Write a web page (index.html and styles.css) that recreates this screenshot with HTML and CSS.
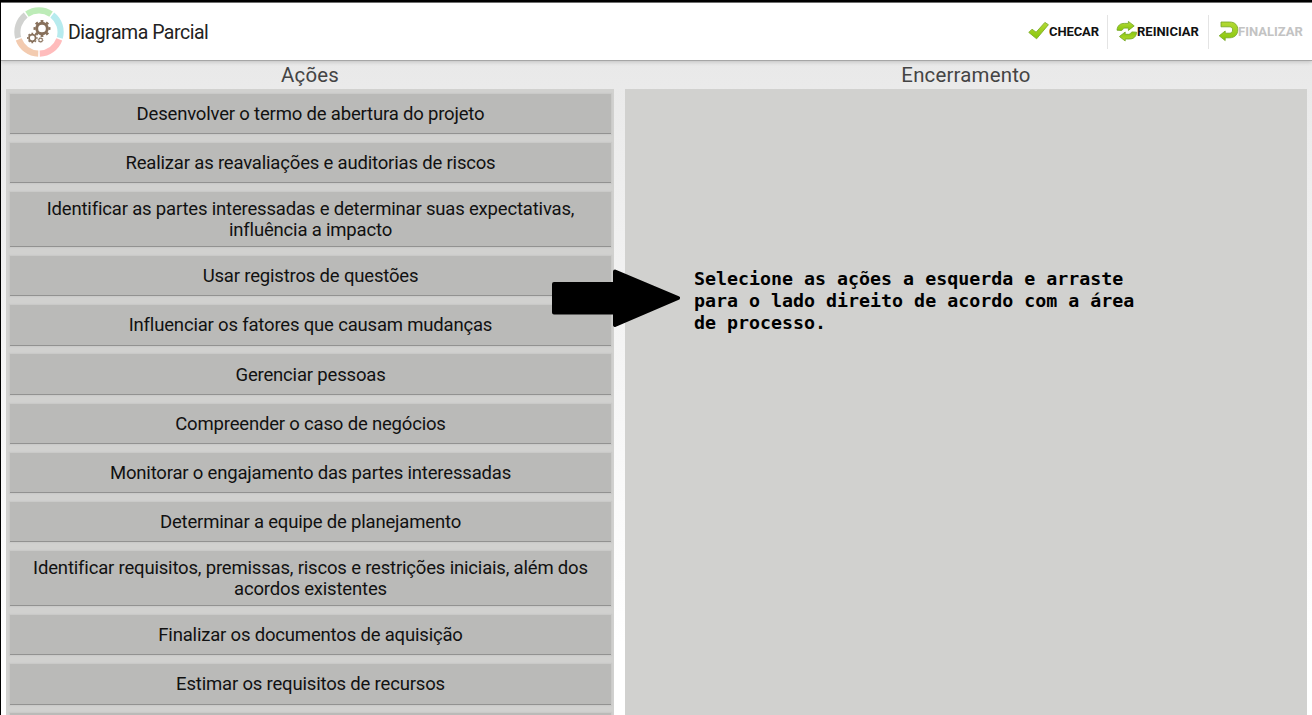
FILE: index.html
```html
<!DOCTYPE html>
<html lang="pt-BR">
<head>
<meta charset="utf-8">
<title>Diagrama Parcial</title>
<link rel="stylesheet" href="styles.css">
</head>
<body>
<div class="screen">
  <header class="bar">
    <svg class="logo" viewBox="0 0 50 50">
      <g fill="none" stroke-width="6.2">
        <circle class="seg" cx="25" cy="25" r="21.6" pathLength="360" stroke="#ffbcbc" transform="rotate(20 25 25)"/>
        <circle class="seg" cx="25" cy="25" r="21.6" pathLength="360" stroke="#f3cbb0" transform="rotate(92 25 25)"/>
        <circle class="seg" cx="25" cy="25" r="21.6" pathLength="360" stroke="#d1d2d0" transform="rotate(164 25 25)"/>
        <circle class="seg" cx="25" cy="25" r="21.6" pathLength="360" stroke="#bdecb8" transform="rotate(236 25 25)"/>
        <circle class="seg" cx="25" cy="25" r="21.6" pathLength="360" stroke="#b7ebee" transform="rotate(308 25 25)"/>
      </g>
      <g fill="none" stroke="#87705b">
        <circle cx="28" cy="21.5" r="5.3" stroke-width="2.9"/>
        <circle cx="28" cy="21.5" r="7.4" stroke-width="2.2" pathLength="160" stroke-dasharray="10 10" stroke-dashoffset="5"/>
        <circle cx="18.3" cy="31" r="3.3" stroke-width="1.7"/>
        <circle cx="18.3" cy="31" r="4.6" stroke-width="1.3" pathLength="160" stroke-dasharray="10 10" stroke-dashoffset="5"/>
        <circle cx="26.6" cy="33" r="1.8" stroke-width="1.1"/>
        <circle cx="26.6" cy="33" r="2.5" stroke-width=".7" pathLength="160" stroke-dasharray="10 10"/>
      </g>
    </svg>
    <h1 class="title">Diagrama Parcial</h1>
    <nav class="actions">
      <span class="action check">
        <svg class="icon" viewBox="0 0 22 22"><path d="M1.8 11.4 5 8.2 9.1 11.2 17.9 1.4 21.4 3.7 9.6 17.8Z" fill="url(#g)" stroke="#7fae2b" stroke-width=".9" stroke-linejoin="round"/></svg>
        <b class="label">CHECAR</b>
      </span>
      <span class="action restart">
        <svg class="icon" viewBox="0 0 22 22"><g id="half"><path d="M1 9.2C1.4 4.2 4.4 2.4 8.4 2.4H12.4V.4L18.2 4.9 12.4 9.4V7.1H8.8C6.8 7.1 7 9.2 5.4 9.5Z" fill="url(#g)" stroke="#71a421" stroke-width=".8" stroke-linejoin="round"/></g><use href="#half" transform="rotate(180 10.8 10.2)"/></svg>
        <b class="label">REINICIAR</b>
      </span>
      <span class="action finish">
        <svg class="icon" viewBox="0 0 22 22"><path d="M3 1H11.6C17.2 1 19.8 4.4 19.8 8.8S17 16.8 11.6 16.8H7.2V19.6L1.2 14.8 7.2 10V12.2H11.2C13.4 12.2 14.6 11 14.6 8.9S13.4 5.8 11.2 5.8H3Z" fill="url(#g)" stroke="#71a421" stroke-width=".8" stroke-linejoin="round"/></svg>
        <b class="label">FINALIZAR</b>
      </span>
    </nav>
    <svg class="defs"><defs><linearGradient id="g" x1="0" y1="0" x2="0" y2="1"><stop offset="0" stop-color="#b4da35"/><stop offset="1" stop-color="#88c60c"/></linearGradient></defs></svg>
  </header>
  <main class="board">
    <section class="column source">
      <h2 class="heading">Ações</h2>
      <div class="panel">
        <div class="item">Desenvolver o termo de abertura do projeto</div>
        <div class="item">Realizar as reavaliações e auditorias de riscos</div>
        <div class="item tall">Identificar as partes interessadas e determinar suas expectativas,<br>influência a impacto</div>
        <div class="item">Usar registros de questões</div>
        <div class="item">Influenciar os fatores que causam mudanças</div>
        <div class="item">Gerenciar pessoas</div>
        <div class="item">Compreender o caso de negócios</div>
        <div class="item">Monitorar o engajamento das partes interessadas</div>
        <div class="item">Determinar a equipe de planejamento</div>
        <div class="item tall">Identificar requisitos, premissas, riscos e restrições iniciais, além dos<br>acordos existentes</div>
        <div class="item">Finalizar os documentos de aquisição</div>
        <div class="item">Estimar os requisitos de recursos</div>
        <div class="item"></div>
      </div>
    </section>
    <section class="column target">
      <h2 class="heading">Encerramento</h2>
      <div class="panel drop">
        <p class="hint">Selecione as ações a esquerda e arraste<br>para o lado direito de acordo com a área<br>de processo.</p>
      </div>
    </section>
  </main>
  <svg class="arrow" viewBox="0 0 130 60"><path d="M4 16H65V3.5L128 30 65 57V44.5H4Z" stroke="#000" stroke-width="4" stroke-linejoin="round"/></svg>
</div>
</body>
</html>
```

FILE: styles.css
```css
* { box-sizing: border-box; }
body {
  margin: 0;
  font-family: Roboto, "Liberation Sans", sans-serif;
}
.screen {
  position: relative;
  display: flex;
  flex-direction: column;
  height: 715px;
  overflow: hidden;
  border-top: 2px solid #000;
  border-left: 1px solid #000;
  background: linear-gradient(#e9e9e9 60px, #eeeeee 180px, #fff 640px);
}
.bar {
  display: flex;
  align-items: center;
  flex: none;
  height: 59px;
  padding-left: 13px;
  background: #fff;
  border-top: 1px solid #6e6e6e;
  border-bottom: 1px solid #a6a6a6;
  box-shadow: 0 1px 4px rgba(0, 0, 0, .18);
}
.logo { width: 50px; height: 50px; }
.seg { stroke-dasharray: 68 292; }
.title {
  margin: 1px 0 0 4px;
  font-size: 19.5px;
  letter-spacing: -.48px;
  font-weight: 400;
  color: #222;
}
.actions { display: flex; margin-left: auto; height: 34px; }
.action { display: flex; align-items: center; border-left: 1px solid #e4e4e4; }
.check { width: 80px; border-left: 0; }
.restart { width: 101px; padding-left: 8px; }
.finish { width: 104px; padding-left: 9px; }
.icon { width: 22px; height: 22px; flex: none; }
.label { font-size: 13px; font-weight: 700; letter-spacing: -.1px; color: #111; }
.restart .label { margin-left: -1px; letter-spacing: 0; }
.finish .label { color: #c3c3c3; margin-left: -2px; letter-spacing: 0; }
.defs { position: absolute; width: 0; height: 0; }
.board { display: flex; flex: 1; min-height: 0; padding: 0 5px; gap: 11px; }
.column { display: flex; flex-direction: column; }
.source { width: 608px; }
.target { flex: 1; }
.heading {
  flex: none;
  height: 28px;
  margin: 0;
  font-size: 20.4px;
  line-height: 29.4px;
  letter-spacing: .2px;
  font-weight: 400;
  text-align: center;
  color: #444;
}
.panel {
  display: flex;
  flex-direction: column;
  flex: 1;
  gap: 8.8px;
  min-height: 0;
  overflow: hidden;
  padding: 4.6px 3px 0 4px;
  background: #d1d1cf;
}
.item {
  display: flex;
  align-items: center;
  justify-content: center;
  flex: none;
  height: 40.4px;
  padding-top: 2.6px;
  border-bottom: 1px solid #929291;
  box-shadow: 0 0 1px 1px #cacac8;
  background: #babab8;
  font-size: 18.5px;
  line-height: 21.5px;
  letter-spacing: -.18px;
  text-align: center;
  white-space: nowrap;
  color: #111;
}
.tall { height: 55.2px; }
.hint {
  margin: 174.4px 0 0 65px;
  font: 700 18.3px/22px "DejaVu Sans Mono", monospace;
  color: #000;
}
.arrow { position: absolute; left: 549px; top: 266px; width: 130px; height: 60px; }
```
